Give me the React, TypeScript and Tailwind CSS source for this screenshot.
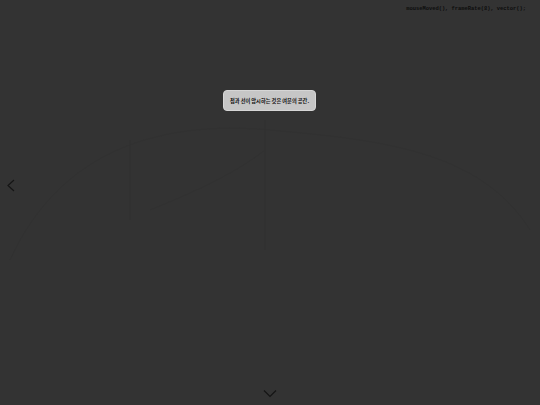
export default function App() {
  return (
    <div className="relative w-[540px] h-[405px] overflow-hidden bg-[#333333]">
      <svg className="absolute inset-0" width="540" height="405" viewBox="0 0 540 405" fill="none">
        <path d="M10 260 C 60 150, 160 120, 270 130 S 480 150, 530 230" stroke="#313131" strokeWidth="1" />
        <path d="M130 140 L130 220" stroke="#313131" strokeWidth="1" />
        <path d="M265 120 L265 250" stroke="#313131" strokeWidth="1" />
        <path d="M150 210 C 200 190, 240 170, 265 150" stroke="#313131" strokeWidth="1" />
      </svg>

      <div className="absolute top-[7px] right-[14px] font-['Liberation_Mono',monospace] text-[5.4px] font-bold leading-none text-[#0d0d0d]">
        mouseMoved(), frameRate(8), vector();
      </div>

      <div className="absolute left-[223px] top-[90px] w-[93px] h-[21px] flex items-center justify-center rounded-[4px] border border-[#d6d6d6] bg-[#c6c6c6]">
        <span className="font-['Noto_Sans_CJK_KR',sans-serif] text-[5.2px] font-bold leading-none text-[#111111]">
          점과 선이 암시하는 것은 여분의 공간.
        </span>
      </div>

      <svg className="absolute left-[6px] top-[179px]" width="10" height="13" viewBox="0 0 10 13" fill="none">
        <path d="M8 1 L2 6.5 L8 12" stroke="#151515" strokeWidth="1.2" />
      </svg>

      <svg className="absolute left-[263px] top-[389px]" width="14" height="9" viewBox="0 0 14 9" fill="none">
        <path d="M1 1.5 L7 7.5 L13 1.5" stroke="#151515" strokeWidth="1.2" />
      </svg>
    </div>
  );
}
